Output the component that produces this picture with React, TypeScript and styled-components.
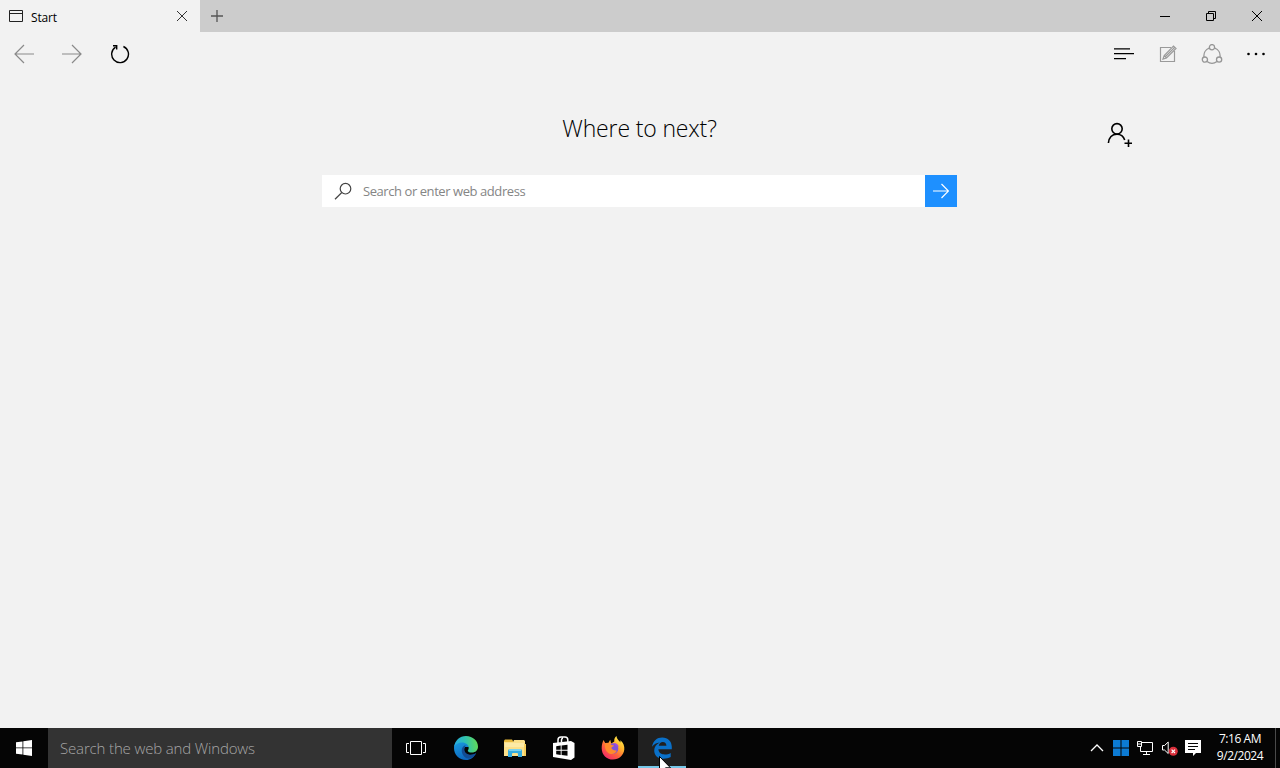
import React from 'react';
import styled, { createGlobalStyle, css } from 'styled-components';

const GlobalStyle = createGlobalStyle`
  * {
    box-sizing: border-box;
  }
  body {
    margin: 0;
    overflow: hidden;
    font-family: 'Open Sans', 'Noto Sans', sans-serif;
  }
  button {
    padding: 0;
    border: 0;
    background: none;
    font: inherit;
    color: inherit;
  }
  svg {
    display: block;
    flex-shrink: 0;
  }
`;

const Desktop = styled.div`
  display: flex;
  flex-direction: column;
  width: 1280px;
  height: 768px;
  background: #f2f2f2;
`;

const TabBar = styled.header`
  display: flex;
  height: 32px;
  background: #cccccc;
`;

const Tab = styled.div`
  display: flex;
  align-items: center;
  width: 200px;
  padding: 0 10px 0 8px;
  background: #f2f2f2;
  font-size: 12px;
  & > span {
    flex: 1;
    margin: 3px 0 0 7px;
    letter-spacing: -0.15px;
  }
`;

const WindowControls = styled.div`
  display: flex;
  margin-left: auto;
`;

const IconButton = styled.button<{ $width: number; $color?: string }>`
  display: flex;
  align-items: center;
  justify-content: center;
  width: ${(props) => props.$width}px;
  height: 100%;
  color: ${(props) => props.$color || '#000'};
`;

const Toolbar = styled.nav`
  display: flex;
  justify-content: space-between;
  height: 44px;
  padding-right: 2px;
`;

const ToolGroup = styled.div`
  display: flex;
`;

const StartPage = styled.main`
  display: grid;
  grid-template-columns: 322px 635px 1fr;
  grid-template-rows: 99px 32px;
  flex: 1;
`;

const Title = styled.h1`
  grid-column: 2;
  margin: 35px 0 0;
  font-size: 23px;
  font-weight: 340;
  line-height: 34px;
  text-align: center;
  letter-spacing: -0.15px;
`;

const Profile = styled.div`
  padding: 46px 0 0 149px;
`;

const AddressBar = styled.div`
  display: flex;
  grid-column: 2;
  grid-row: 2;
  align-items: center;
  background: #fff;
  & > svg {
    margin-left: 12px;
  }
  & > span {
    flex: 1;
    margin-left: 10px;
    font-size: 13px;
    letter-spacing: -0.43px;
    color: #858585;
  }
`;

const GoButton = styled.button`
  display: flex;
  align-items: center;
  justify-content: center;
  width: 32px;
  height: 32px;
  background: #1e90ff;
`;

const Taskbar = styled.footer`
  display: flex;
  height: 40px;
  background: #050505;
  color: #fff;
`;

const TaskSearch = styled.div`
  width: 344px;
  padding-left: 12px;
  background: #333333;
  color: #a6a6a6;
  font-size: 15px;
  line-height: 41px;
  font-weight: 300;
  letter-spacing: -0.15px;
`;

const Apps = styled.div`
  display: flex;
  gap: 1px;
  margin-left: 2px;
`;

const AppButton = styled.button<{ $active?: boolean }>`
  position: relative;
  display: flex;
  align-items: center;
  justify-content: center;
  width: 48px;
  height: 40px;
  ${(props) =>
    props.$active &&
    css`
      background: #202020;
      border-bottom: 2px solid #76c7e8;
      padding-top: 2px;
    `}
`;

const Cursor = styled.svg`
  position: absolute;
  left: 21px;
  top: 28px;
`;

const Tray = styled.div`
  display: flex;
  margin-left: auto;
`;

const Clock = styled.div`
  width: 70px;
  padding-top: 2px;
  font-size: 12px;
  line-height: 17px;
  text-align: center;
  letter-spacing: -0.45px;
`;

const ShowDesktop = styled.div`
  width: 5px;
  border-left: 1px solid #4a4a4a;
`;

const CloseIcon = () => (
  <svg width="12" height="12" fill="none" stroke="currentColor">
    <path d="M1 1L11 11M11 1L1 11" />
  </svg>
);

const ArrowIcon = ({ back }: { back?: boolean }) => (
  <svg width="20" height="20" fill="none" stroke="currentColor" strokeWidth="1.2">
    <path d={back ? 'M20 10H1M10 1L1 10L10 19' : 'M0 10H19M10 1L19 10L10 19'} />
  </svg>
);

const WindowsLogo = () => (
  <svg width="16" height="16" fill="#fff">
    <path d="M0 2.3L6.5 1.4V7.5H0ZM7.3 1.3L16 0V7.5H7.3ZM0 8.3H6.5V14.6L0 13.7ZM7.3 8.3H16V16L7.3 14.7Z" />
  </svg>
);

const EdgeIcon = () => (
  <svg width="24" height="24" viewBox="0 0 24 24">
    <defs>
      <linearGradient id="edgeTop" x1="0" y1="0.6" x2="1" y2="0.5">
        <stop offset="0" stopColor="#25a9e5" />
        <stop offset="0.5" stopColor="#2fc2b0" />
        <stop offset="1" stopColor="#62d957" />
      </linearGradient>
      <linearGradient id="edgeLeft" x1="0" y1="0" x2="0.5" y2="1">
        <stop offset="0" stopColor="#1a9de0" />
        <stop offset="1" stopColor="#0c64bd" />
      </linearGradient>
    </defs>
    <path fill="url(#edgeLeft)" d="M0 12C0 7 4 5.5 8 5.5C12 5.5 15 8 15 11L11 11C9 13 10 19 16 19C18.5 19 20.5 18 22 17C20 21.5 16.5 24 12 24C5 24 0 18.8 0 12Z" />
    <path fill="#124c94" d="M11.2 9.3C6.4 11 6.5 18.5 12 22C16 23.5 20.4 20.5 22 17.4C17.5 20 10.5 18.4 10.3 13.4C10.2 11.5 11 10.6 11.6 10Z" />
    <path fill="url(#edgeTop)" d="M.1 11C.8 4.6 5.7 0 12 0C19 0 24 5.1 24 10.5C24 14.4 21.4 16.5 18 16.5C14.9 16.5 13.8 15.5 13.8 14.7C13.8 14 14.7 13.5 14.7 11.9C14.7 8.8 11.7 6.5 8 6.5C4.6 6.5 1.6 8.2.1 11Z" />
  </svg>
);

const FolderIcon = () => (
  <svg width="22" height="19" viewBox="0 0 22 19">
    <path fill="#e8b93b" d="M0 1.5L1 .5H8L9 2V5H0Z" />
    <path fill="#fce08a" d="M0 3H9L10 1H20L21 2V17H0Z" />
    <path fill="#fdeaa6" d="M1 4H20V8H1Z" />
    <path fill="#f6cf5c" d="M20 5H22V17H20Z" />
    <path fill="#35ace0" d="M4 18V12Q4 10 6 10H16Q18 10 18 12V18H14V15Q14 14 13 14H9Q8 14 8 15V18Z" />
    <path fill="#7cd2ee" d="M5 10H17V12H5Z" />
  </svg>
);

const StoreIcon = () => (
  <svg width="22" height="24" viewBox="0 0 22 24">
    <path fill="none" stroke="#fff" strokeWidth="1.5" d="M5 7V4C5 2 6.3 1 8 1H12C13.8 1 14.8 2.4 14.8 4V6M8.5 6V3.8Q8.5 2.4 10 2.2" />
    <path fill="#fff" d="M0 7L18 5V24L0 21ZM18 5L21.5 7V21.5L18 24Z" />
    <path fill="#050505" d="M3.2 10.2L7.7 9.6V13.8H3.2ZM8.6 9.5L14.5 8.8V13.8H8.6ZM3.2 14.7H7.7V18.9L3.2 18.3ZM8.6 14.7H14.5V19.8L8.6 19Z" />
  </svg>
);

const FirefoxIcon = () => (
  <svg width="24" height="24" viewBox="0 0 24 24">
    <defs>
      <linearGradient id="foxBody" x1="0.85" y1="0.05" x2="0.2" y2="0.95">
        <stop offset="0" stopColor="#fff04c" />
        <stop offset="0.35" stopColor="#ffb22c" />
        <stop offset="0.65" stopColor="#ff623b" />
        <stop offset="1" stopColor="#f22b68" />
      </linearGradient>
    </defs>
    <path fill="url(#foxBody)" d="M2.5 4L4.2 7L7.5 6.8L9.2 3.8L10.2 7.5L13.3 5.6C12.9 3 14 1.2 15.5 0C15.9 3.4 18.1 4.3 19.4 6.6L19.4 4.2C22.4 6.9 23.7 10 23.3 13.5C22.6 19.5 18 23.5 12 23.5C5.6 23.5.8 18.7.7 12.4C.6 9 1.5 6.2 2.5 4Z" />
    <circle cx="12" cy="12.5" r="5.3" fill="#8052d8" />
    <path fill="#ff8b2d" d="M4 8C6 6.7 9 7.3 10.5 9L13 9.5C13 10.6 11 10.6 10.5 11.6C10.2 13.3 12.4 14.8 15.8 14.6C15 17 12.5 18.5 9.6 18C5.3 17 3.3 12 4 8Z" />
    <path fill="#a34ae0" d="M12.5 7C15 6.8 17.2 8.4 17.7 11L15 10Z" />
  </svg>
);

const EdgeLegacyIcon = () => (
  <svg width="22" height="22" viewBox="0 0 22 22">
    <path
      fill="#0a70c8"
      d="M1 9.8C2 3.8 6 .5 11.2.5C17 .5 20.8 4.5 20.8 9.8V12.3H7.4C7.6 15.8 10.5 17.5 13.8 17.5C16 17.5 18 16.9 19.7 15.9V20C17.5 21.2 15.3 21.7 12.6 21.7C6.6 21.7 3.2 18.2 3.2 13.4C3.2 9.6 5.4 7.1 8.7 5.4C5.5 5.7 2.7 7.2 1 9.8ZM7.7 8.7H15.4C15.4 6.3 14 4.9 11.8 4.9C9.8 4.9 8.2 6.4 7.7 8.7Z"
    />
  </svg>
);

const App: React.FC = () => (
  <>
    <GlobalStyle />
    <Desktop>
      <TabBar>
        <Tab>
          <svg width="16" height="14" fill="none" stroke="#222">
            <path d="M1.5 1.5H14.5V12.5H1.5ZM2 4.5H14" />
          </svg>
          <span>Start</span>
          <IconButton $width={16} $color="#333">
            <CloseIcon />
          </IconButton>
        </Tab>
        <IconButton $width={34} $color="#555">
          <svg width="14" height="14" stroke="currentColor" strokeWidth="1.3">
            <path d="M7 1V13M1 7H13" />
          </svg>
        </IconButton>
        <WindowControls>
          <IconButton $width={46}>
            <svg width="10" height="10" stroke="currentColor">
              <path d="M0 5.5H10" />
            </svg>
          </IconButton>
          <IconButton $width={46}>
            <svg width="10" height="10" fill="none" stroke="currentColor">
              <path d="M.5 2.5H7.5V9.5H.5ZM2.5 2.5V.5H9.5V7.5H7.5" />
            </svg>
          </IconButton>
          <IconButton $width={46}>
            <CloseIcon />
          </IconButton>
        </WindowControls>
      </TabBar>
      <Toolbar>
        <ToolGroup>
          <IconButton $width={48} $color="#8a8a8a">
            <ArrowIcon back />
          </IconButton>
          <IconButton $width={48} $color="#8a8a8a">
            <ArrowIcon />
          </IconButton>
          <IconButton $width={48}>
            <svg width="20" height="20" fill="none" stroke="currentColor" strokeWidth="1.4">
              <path d="M5.6 3.1A8.4 8.4 0 1 0 13.4 2.5M3 1.7H6.7V5.4" />
            </svg>
          </IconButton>
        </ToolGroup>
        <ToolGroup>
          <IconButton $width={44}>
            <svg width="20" height="12" stroke="currentColor" strokeWidth="1.2">
              <path d="M0 .8H16M0 5.6H20M0 10.6H12" />
            </svg>
          </IconButton>
          <IconButton $width={44} $color="#9a9a9a">
            <svg width="18" height="18" fill="none" stroke="currentColor" strokeWidth="1.2">
              <path d="M12 2.5H1.5V16.5H15.5V6M4 14L5.2 10.5L14.5 1.2L17 3.5L7.5 13ZM5.2 10.5L7.5 13M6.3 11.7L15.7 2.4" />
            </svg>
          </IconButton>
          <IconButton $width={44} $color="#969696">
            <svg width="22" height="20" fill="none" stroke="currentColor" strokeWidth="1.3">
              <circle cx="11" cy="3.2" r="2.6" />
              <circle cx="3.9" cy="15.6" r="2.6" />
              <circle cx="18.1" cy="15.6" r="2.6" />
              <path d="M8.2 4.2A8.2 8.2 0 0 0 3 13M13.8 4.2A8.2 8.2 0 0 1 19 13M6 17.4A8.2 8.2 0 0 0 16 17.4" />
            </svg>
          </IconButton>
          <IconButton $width={44}>
            <svg width="20" height="4" fill="currentColor">
              <circle cx="2.5" cy="2" r="1.3" />
              <circle cx="10" cy="2" r="1.3" />
              <circle cx="17.5" cy="2" r="1.3" />
            </svg>
          </IconButton>
        </ToolGroup>
      </Toolbar>
      <StartPage>
        <Title>Where to next?</Title>
        <Profile>
          <svg width="28" height="26" fill="none" stroke="#000" strokeWidth="1.6">
            <circle cx="11" cy="6.8" r="5.2" />
            <path d="M2.4 21C3 15 6.6 12.2 11 12.2C14.6 12.2 17.5 14.4 18.7 18M22.5 17.5V25M18.5 21.3H26" />
          </svg>
        </Profile>
        <AddressBar>
          <svg width="19" height="18" fill="none" stroke="#444" strokeWidth="1.2">
            <circle cx="11.5" cy="6.7" r="5.3" />
            <path d="M7.8 10.5L1 17.2" />
          </svg>
          <span>Search or enter web address</span>
          <GoButton>
            <svg width="16" height="16" fill="none" stroke="#fff" strokeWidth="1.2">
              <path d="M0 8H15.5M8.5 1L15.5 8L8.5 15" />
            </svg>
          </GoButton>
        </AddressBar>
      </StartPage>
      <Taskbar>
        <AppButton>
          <WindowsLogo />
        </AppButton>
        <TaskSearch>Search the web and Windows</TaskSearch>
        <AppButton>
          <svg width="20" height="14" fill="none" stroke="#fff">
            <path d="M4.5.5H15.5V13.5H4.5ZM3 2.5H.5V11.5H3M17 2.5H19.5V11.5H17" />
          </svg>
        </AppButton>
        <Apps>
          <AppButton>
            <EdgeIcon />
          </AppButton>
          <AppButton>
            <FolderIcon />
          </AppButton>
          <AppButton>
            <StoreIcon />
          </AppButton>
          <AppButton>
            <FirefoxIcon />
          </AppButton>
          <AppButton $active>
            <EdgeLegacyIcon />
            <Cursor width="13" height="20" viewBox="0 0 13 20" fill="#fff" stroke="#000">
              <path d="M.5.5V16L4 12.7L6.5 18.5L9 17.4L6.5 11.8H11.5Z" />
            </Cursor>
          </AppButton>
        </Apps>
        <Tray>
          <IconButton $width={24} $color="#fff">
            <svg width="14" height="8" fill="none" stroke="currentColor" strokeWidth="1.3">
              <path d="M1 7L7 1L13 7" />
            </svg>
          </IconButton>
          <IconButton $width={24} $color="#0c7bd4">
            <svg width="16" height="16" fill="currentColor">
              <path d="M0 0H7.5V7.5H0ZM8.5 0H16V7.5H8.5ZM0 8.5H7.5V16H0ZM8.5 8.5H16V16H8.5Z" />
            </svg>
          </IconButton>
          <IconButton $width={24} $color="#fff">
            <svg width="16" height="14" fill="none" stroke="currentColor">
              <path d="M5 1.5H15.5V10.5H3.5V6M.5.5H4.5V5.5H.5ZM1 3H4M9.5 10.5V13M6 13.5H13" />
            </svg>
          </IconButton>
          <IconButton $width={24} $color="#fff">
            <svg width="17" height="16" fill="none" stroke="currentColor">
              <path d="M1.5 5.5H3.5L7.2 2V13.5L3.5 10H1.5Z" />
              <circle cx="12.3" cy="11.3" r="4.5" fill="#d92f3b" stroke="none" />
              <path d="M10.6 9.6L14 13M14 9.6L10.6 13" strokeWidth="1.2" />
            </svg>
          </IconButton>
          <IconButton $width={24} $color="#fff">
            <svg width="16" height="16">
              <path fill="#fff" d="M0 0H16V13H11L8 16V13H0Z" />
              <path stroke="#050505" d="M3 3.5H13M3 6.5H13M3 9.5H10" />
            </svg>
          </IconButton>
          <Clock>
            7:16 AM
            <br />
            9/2/2024
          </Clock>
          <ShowDesktop />
        </Tray>
      </Taskbar>
    </Desktop>
  </>
);

export default App;
